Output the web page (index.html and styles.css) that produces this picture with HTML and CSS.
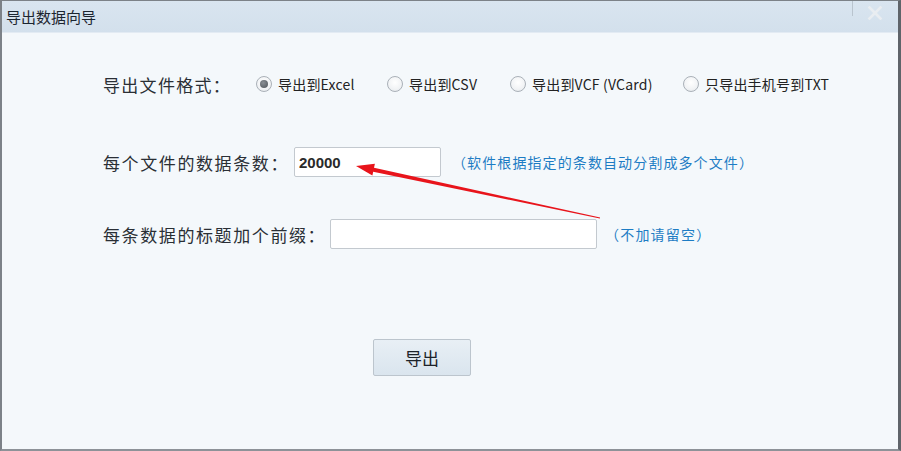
FILE: index.html
```html
<!DOCTYPE html>
<html lang="zh-CN">
<head>
<meta charset="utf-8">
<title>导出数据向导</title>
<link rel="stylesheet" href="styles.css">
</head>
<body>
<div class="window">
  <div class="titlebar">
    <span class="title">导出数据向导</span>
    <div class="close">
      <svg width="16" height="14" viewBox="0 0 16 14"><path d="M2.5 1.5 L13.5 12.5 M13.5 1.5 L2.5 12.5" stroke="#e9edf1" stroke-width="2.6" stroke-linecap="square"/></svg>
    </div>
  </div>
  <div class="content">
    <div class="row row-format">
      <span class="label label-format">导出文件格式：</span>
      <label class="opt opt1"><span class="radio checked"></span><span class="opt-text">导出到Excel</span></label>
      <label class="opt opt2"><span class="radio"></span><span class="opt-text">导出到CSV</span></label>
      <label class="opt opt3"><span class="radio"></span><span class="opt-text">导出到VCF (VCard)</span></label>
      <label class="opt opt4"><span class="radio"></span><span class="opt-text">只导出手机号到TXT</span></label>
    </div>
    <div class="row row-count">
      <span class="label label-count">每个文件的数据条数：</span>
      <div class="input input-count">20000</div>
      <span class="hint hint-count">（软件根据指定的条数自动分割成多个文件）</span>
    </div>
    <div class="row row-prefix">
      <span class="label label-prefix">每条数据的标题加个前缀：</span>
      <div class="input input-prefix"></div>
      <span class="hint hint-prefix">（不加请留空）</span>
    </div>
    <div class="row row-button">
      <button class="btn">导出</button>
    </div>
  </div>
  <svg class="arrow" width="901" height="451" viewBox="0 0 901 451">
    <polygon points="356,166 374.9,163.8 374.0,167.7 600.1,217.5 599.9,218.5 373.2,171.7 372.4,175.6" fill="#e8141b"/>
  </svg>
</div>
</body>
</html>
```
FILE: styles.css
```css
* { box-sizing: border-box; }
html, body { margin: 0; padding: 0; }
body {
  width: 901px;
  height: 451px;
  overflow: hidden;
  font-family: "Noto Sans CJK SC", "Liberation Sans", sans-serif;
  background: #f4f8fb;
}
.window {
  position: relative;
  width: 901px;
  height: 451px;
  border: 1px solid #7c8288;
  border-left-width: 2px;
  border-bottom-width: 2px;
  border-right-width: 3px;
  border-right-color: #5f646a;
  border-bottom-color: #8d9298;
  background: #f4f8fb;
  display: flex;
  flex-direction: column;
}
.titlebar {
  height: 32px;
  flex: none;
  background: linear-gradient(#d9e5f0, #d3e0ec);
  display: flex;
  align-items: center;
  position: relative;
  border-bottom: 1px solid #e3ebf3;
}
.title {
  margin-left: 4px;
  margin-top: -1px;
  font-size: 15px;
  color: #1c2530;
  letter-spacing: 0;
}
.close {
  position: absolute;
  right: 0;
  top: 0;
  width: 46px;
  height: 24px;
  display: flex;
  align-items: center;
  justify-content: center;
}
.close::before {
  content: "";
  position: absolute;
  left: 0;
  top: 0;
  width: 1px;
  height: 15px;
  background: #b9c4ce;
}
.content {
  flex: 1;
  padding: 33px 0 0 101px;
  display: flex;
  flex-direction: column;
}
.row {
  display: flex;
  align-items: center;
}
.label {
  font-size: 17px;
  letter-spacing: 1.6px;
  color: #2a2f35;
  flex: none;
  white-space: nowrap;
}
.row-format { height: 36px; }
.label-format { width: 153px; letter-spacing: 1.3px; }
.opt {
  display: flex;
  align-items: center;
  flex: none;
  font-size: 14px;
  color: #222;
  white-space: nowrap;
}
.opt1 { width: 131px; }
.opt2 { width: 123px; }
.opt3 { width: 173px; }
.opt4 { width: auto; }
.opt-text { margin-left: 6px; letter-spacing: 0.2px; }
.radio {
  width: 16px;
  height: 16px;
  border-radius: 50%;
  border: 1px solid #aab1b8;
  background: radial-gradient(circle at 50% 40%, #ffffff 0%, #f1f3f5 60%, #e0e4e8 100%);
  display: flex;
  align-items: center;
  justify-content: center;
  flex: none;
}
.radio.checked::after {
  content: "";
  width: 8px;
  height: 8px;
  border-radius: 50%;
  background: radial-gradient(circle at 40% 35%, #8a8f95, #4f5459);
}
.row-count { height: 30px; margin-top: 45px; }
.label-count { width: 191px; }
.input {
  height: 30px;
  background: #ffffff;
  border: 1px solid #c3c9cf;
  border-radius: 2px;
  flex: none;
  display: flex;
  align-items: center;
  padding-left: 4px;
  font-size: 15px;
  color: #1e1e1e;
}
.input-count { width: 147px; font-weight: bold; font-family: "Liberation Sans", "Noto Sans CJK SC", sans-serif; color: #2a2a2a; }
.hint {
  font-size: 14px;
  color: #1d7cc4;
  white-space: nowrap;
}
.hint-count { margin-left: 11px; letter-spacing: 1.1px; }
.row-prefix { height: 30px; margin-top: 42px; }
.label-prefix { width: 227px; }
.input-prefix { width: 267px; }
.hint-prefix { margin-left: 8px; letter-spacing: 1.2px; }
.row-button { margin-top: 90px; }
.btn {
  margin-left: 270px;
  width: 98px;
  height: 37px;
  border: 1px solid #bcc5cd;
  border-radius: 2px;
  background: linear-gradient(#e8eff5, #dae5ee);
  font-family: "Noto Sans CJK SC", sans-serif;
  font-size: 17px;
  color: #1d232a;
  padding: 0;
}
.arrow {
  position: absolute;
  left: -2px;
  top: -1px;
  pointer-events: none;
}
```
